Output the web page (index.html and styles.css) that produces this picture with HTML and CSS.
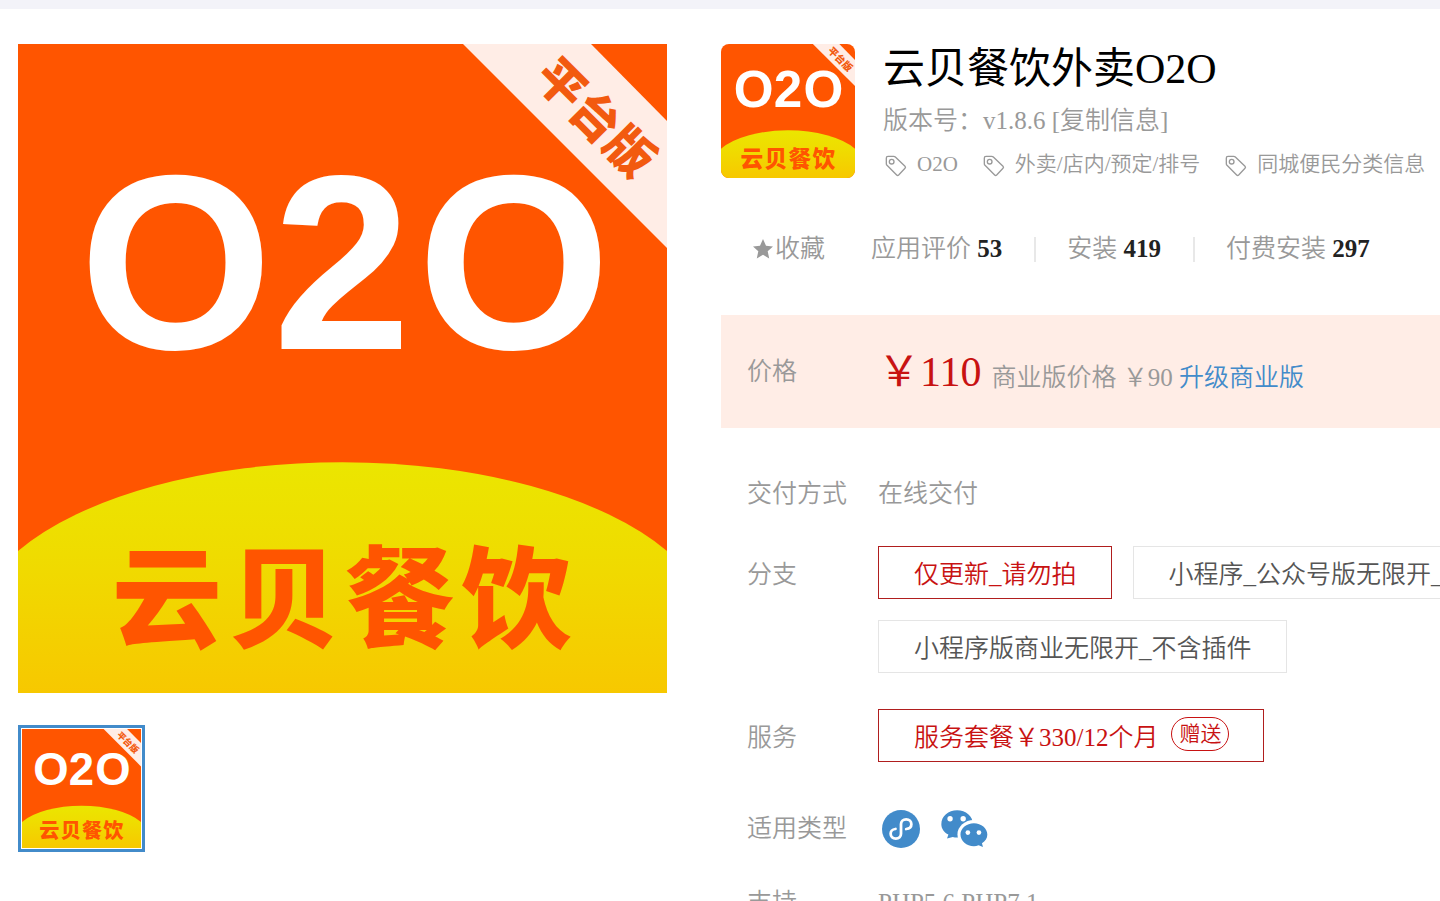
FILE: index.html
```html
<!DOCTYPE html>
<html lang="zh-CN">
<head>
<meta charset="utf-8">
<meta name="viewport" content="width=device-width, initial-scale=1">
<title>云贝餐饮外卖O2O</title>
<link rel="stylesheet" href="styles.css">
</head>
<body>
<div class="strip"></div>
<main class="page">
  <section class="gallery">
    <svg class="cover" viewBox="0 0 649 649" role="img" aria-label="云贝餐饮">
      <defs>
        <linearGradient id="hill" x1="0" y1="0" x2="0" y2="1">
          <stop offset="0" stop-color="#ebe600"/>
          <stop offset="0.4" stop-color="#efdc00"/>
          <stop offset="1" stop-color="#f7c800"/>
        </linearGradient>
        <symbol id="tag" viewBox="0 0 66 66">
          <path d="M4 9Q4 4 9 4H26Q29 4 31 6L60 34Q63 37 60 40L41 60Q38 63 35 60L6 31Q4 29 4 26Z" fill="none" stroke="#999" stroke-width="4"/>
          <circle cx="20" cy="20" r="7" fill="none" stroke="#999" stroke-width="4"/>
        </symbol>
      </defs>
      <g id="cover">
        <rect width="649" height="649" fill="#ff5500"/>
        <path d="M0 507A370 171 0 0 1 649 507V649H0Z" fill="url(#hill)"/>
        <path d="M445 0H573L649 77V204Z" fill="#ffede6"/>
        <text class="cover-tag" transform="translate(578 73) rotate(45)" x="0" y="18" text-anchor="middle">平台版</text>
        <text class="cover-title" x="158 324 496" y="305" text-anchor="middle">O2O</text>
        <text class="cover-name" x="149 266 382 498" y="595" text-anchor="middle">云贝餐饮</text>
      </g>
    </svg>
    <button class="thumb" type="button" aria-label="图片 1"><svg viewBox="0 0 649 649"><use href="#cover"/></svg></button>
  </section>

  <section class="detail">
    <header class="head">
      <svg class="logo" viewBox="0 0 649 649" aria-hidden="true"><use href="#cover"/></svg>
      <div class="head-text">
        <h1>云贝餐饮外卖O2O</h1>
        <p class="version">版本号：v1.8.6 <a href="#copy">[复制信息]</a></p>
        <ul class="tags">
          <li><svg><use href="#tag"/></svg>O2O</li>
          <li><svg><use href="#tag"/></svg>外卖/店内/预定/排号</li>
          <li><svg><use href="#tag"/></svg>同城便民分类信息</li>
        </ul>
      </div>
    </header>

    <div class="stats">
      <button class="fav" type="button"><svg viewBox="0 0 20 20"><path d="M10 0L13 6.700L20 7.400L14.700 12.200L16.200 19.500L10 15.800L3.800 19.500L5.300 12.200L0 7.400L7 6.700Z" fill="#999"/></svg>收藏</button>
      <span class="stat">应用评价 <b>53</b></span>
      <span class="stat">安装 <b>419</b></span>
      <span class="stat">付费安装 <b>297</b></span>
    </div>

    <div class="price">
      <span class="label">价格</span>
      <p class="amount"><strong>￥110</strong><span>商业版价格 ￥90 <a href="#upgrade">升级商业版</a></span></p>
    </div>

    <div class="rows">
      <div class="row"><span class="label">交付方式</span><span>在线交付</span></div>
      <div class="row choice">
        <span class="label">分支</span>
        <div class="options">
          <div class="option-line">
            <button class="option active" type="button">仅更新_请勿拍</button>
            <button class="option" type="button">小程序_公众号版无限开_</button>
          </div>
          <div class="option-line">
            <button class="option" type="button">小程序版商业无限开_不含插件</button>
          </div>
        </div>
      </div>
      <div class="row choice">
        <span class="label">服务</span>
        <button class="option active" type="button">服务套餐￥330/12个月<span class="badge">赠送</span></button>
      </div>
      <div class="row platforms">
        <span class="label">适用类型</span>
        <div class="types">
          <svg class="mini" viewBox="458 42 110 110" role="img" aria-label="小程序">
            <circle cx="513" cy="97" r="55" fill="#428bca"/>
            <path d="M528 97C538 96 543 90 543 83C543 75 537 69 528 69C519 69 513 75 513 83V111C513 119 507 125 498 125C489 125 483 119 483 111C483 104 488 98 497 97" fill="none" stroke="#fff" stroke-width="8" stroke-linecap="round"/>
          </svg>
          <svg class="wechat" viewBox="635 42 140 110" role="img" aria-label="微信">
            <path d="M683 43C709 43 730 61 730 84S709 124 683 124Q676 124 670 122L653 127L657 115C644 108 636 97 636 84C636 61 657 43 683 43Z" fill="#428bca"/>
            <ellipse cx="733" cy="115" rx="49" ry="43" fill="#fff"/>
            <path d="M733 81C755 81 773 96 773 115C773 126 767 135 757 141L760 152L747 147Q740 150 733 150C711 150 693 134 693 115S711 81 733 81Z" fill="#428bca"/>
            <g fill="#fff"><circle cx="662" cy="68" r="8"/><circle cx="701" cy="68" r="8"/><circle cx="715" cy="109" r="7"/><circle cx="748" cy="109" r="7"/></g>
          </svg>
        </div>
      </div>
      <div class="row"><span class="label">支持</span><span>PHP5.6,PHP7.1</span></div>
    </div>
  </section>
</main>
</body>
</html>
```
FILE: styles.css
```css
* { box-sizing: border-box; }

body {
  margin: 0;
  overflow-x: hidden;
  background: #fff;
  color: #999;
  font: 350 25px/36px "Liberation Serif", "Noto Sans CJK SC", sans-serif;
}

h1, p, ul { margin: 0; padding: 0; }
a { color: inherit; text-decoration: none; }
svg { display: block; flex: none; }
button {
  font: inherit;
  color: inherit;
  background: none;
  border: 0;
  padding: 0;
  cursor: pointer;
}

.strip { height: 9px; background: #f3f3f9; }

.page {
  display: grid;
  grid-template-columns: minmax(0, 649fr) minmax(0, 719fr);
  gap: 54px;
  align-items: start;
  padding: 35px 0 0 18px;
}

/* Gallery */
.cover { width: 100%; height: auto; }
.cover-tag { font: 900 48px "Noto Sans CJK SC", sans-serif; fill: #f25a0f; }
.cover-title { font: bold 248px "Liberation Sans", sans-serif; fill: #fff; }
.cover-name {
  font: 900 110px "Noto Sans CJK SC", sans-serif;
  fill: #ff5500;
}
.thumb {
  display: block;
  width: 127px;
  margin-top: 32px;
  padding: 1px;
  border: 3px solid #428bca;
}
.thumb svg { width: 100%; height: auto; }

/* Heading */
.head { display: flex; gap: 28px; }
.logo { width: 134px; height: 134px; border-radius: 8px; }
.head-text { padding-top: 1px; white-space: nowrap; }
h1 { color: #000; font-size: 42px; font-weight: 400; line-height: 48px; }
.version { margin-top: 10px; }
.tags {
  display: flex;
  gap: 25px;
  margin-top: 8px;
  padding-left: 2px;
  list-style: none;
  font-size: 21px;
  line-height: 34px;
}
.tags li { display: flex; align-items: center; gap: 10px; }
.tags svg { width: 22px; height: 22px; margin-top: 4px; }

/* Counters */
.stats {
  display: flex;
  align-items: center;
  margin-top: 50px;
  padding-left: 32px;
  white-space: nowrap;
}
.fav { display: flex; align-items: center; gap: 2px; margin-right: 46px; }
.fav svg { width: 20px; height: 20px; }
.stat { display: flex; align-items: center; white-space: pre; }
.stat b { color: #222; font-weight: 700; }
.stat + .stat::before {
  content: "";
  width: 2px;
  height: 25px;
  margin: 0 31px 0 32px;
  background: #e8e8e8;
}

/* Price */
.label { flex: none; width: 131px; }
.price {
  display: flex;
  align-items: center;
  min-height: 113px;
  margin-top: 48px;
  padding: 1px 0 0 26px;
  background: #ffede6;
  white-space: nowrap;
}
.amount { display: flex; align-items: baseline; gap: 10px; }
.amount strong { color: #c81212; font-size: 42px; font-weight: 400; line-height: 48px; }
.amount a { color: #428bca; }

/* Attributes */
.rows {
  display: flex;
  flex-direction: column;
  gap: 36px;
  padding: 50px 0 0 26px;
  white-space: nowrap;
}
.row { display: flex; align-items: flex-start; line-height: 32px; }
.choice { line-height: 57px; }
.choice .label { height: 53px; }
.options { display: flex; flex-direction: column; gap: 21px; }
.option-line { display: flex; gap: 21px; }
.option {
  display: flex;
  align-items: center;
  flex: none;
  height: 53px;
  padding: 4px 34px 0 35px;
  border: 1px solid #e5e5e5;
  color: #555;
}
.option.active { border-color: #b01e1e; color: #c81212; }
.badge {
  margin: 0 0 8px 13px;
  padding: 0 7px;
  border: 1px solid #c81212;
  border-radius: 17px;
  font-size: 21px;
  line-height: 32px;
}
.platforms { padding-top: 8px; line-height: 45px; }
.types { display: flex; align-items: center; gap: 21px; height: 45px; padding-left: 4px; }
.mini { width: 38px; height: 38px; }
.wechat { width: 47px; height: 37px; }
```
